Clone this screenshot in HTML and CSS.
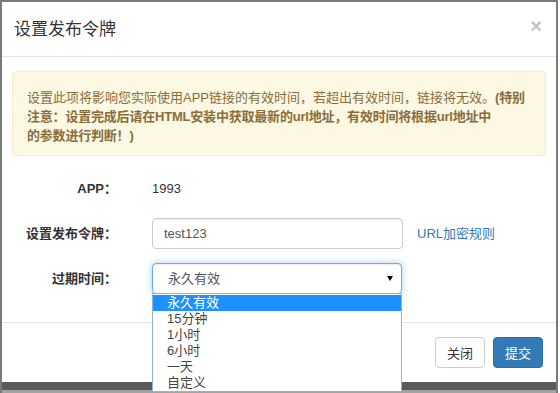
FILE: index.html
```html
<!DOCTYPE html>
<html lang="zh-CN">
<head>
    <meta charset="UTF-8">
    <meta name="viewport" content="width=device-width, initial-scale=1.0">
    <title>设置发布令牌</title>
    <link rel="stylesheet" href="styles.css">
</head>
<body>
    <div class="frame">
        <div class="modal">
            <div class="modal-header">
                <h4 class="modal-title">设置发布令牌</h4>
                <span class="close">&times;</span>
            </div>
            <div class="modal-body">
                <div class="alert">
                    <span>设置此项将影响您实际使用APP链接的有效时间，若超出有效时间，链接将无效。</span><b>(特别<br>注意：设置完成后请在HTML安装中获取最新的url地址，有效时间将根据url地址中<br>的参数进行判断！)</b>
                </div>
                <form class="form-horizontal">
                    <div class="form-group">
                        <label>APP：</label>
                        <div class="form-static">1993</div>
                    </div>
                    <div class="form-group">
                        <label>设置发布令牌：</label>
                        <input type="text" class="form-control" value="test123">
                        <a href="#" class="rule-link">URL加密规则</a>
                    </div>
                    <div class="form-group">
                        <label>过期时间：</label>
                        <div class="select-wrap">
                            <div class="form-control select-box">永久有效<span class="caret"></span></div>
                            <ul class="dropdown">
                                <li class="selected">永久有效</li>
                                <li>15分钟</li>
                                <li>1小时</li>
                                <li>6小时</li>
                                <li>一天</li>
                                <li>自定义</li>
                            </ul>
                        </div>
                    </div>
                </form>
            </div>
            <div class="modal-footer">
                <button type="button" class="btn">关闭</button>
                <button type="button" class="btn btn-primary">提交</button>
            </div>
        </div>
        <div class="backdrop-strip"></div>
    </div>
</body>
</html>
```

FILE: styles.css
```css
:root {
    --color-texto: #333333;
    --color-borde: #cccccc;
    --color-primario: #337ab7;
    --color-aviso-fondo: #fcf8e3;
    --color-aviso-borde: #faebcc;
    --color-aviso-texto: #8a6d3b;
}
html, body {
    margin: 0;
    height: 393px;
    overflow: hidden;
    background: #ffffff;
}
body {
    font-family: "Liberation Sans", "Noto Sans CJK SC", sans-serif;
    font-size: 13px;
    line-height: 19px;
    color: var(--color-texto);
}
.frame {
    width: 558px;
    height: 393px;
    box-sizing: border-box;
    border-top: 2px solid #7a7a7a;
    border-left: 2px solid #7a7a7a;
    border-right: 2px solid #7a7a7a;
    display: flex;
    flex-direction: column;
}
.modal {
    background: #ffffff;
    position: relative;
}
.modal-header {
    display: flex;
    justify-content: space-between;
    align-items: center;
    padding: 16px 14px 14px 12px;
    border-bottom: 1px solid #e5e5e5;
}
.modal-title {
    margin: 0;
    font-size: 17px;
    line-height: 24px;
    font-weight: normal;
}
.close {
    font-size: 20px;
    font-weight: bold;
    line-height: 20px;
    color: #c4c4c4;
    margin-top: -8px;
}
.modal-body {
    padding: 14px 10px 14px 10px;
}
.alert {
    padding: 16px 14px 10px 14px;
    margin-bottom: 17px;
    background: var(--color-aviso-fondo);
    border: 1px solid var(--color-aviso-borde);
    border-radius: 4px;
    color: var(--color-aviso-texto);
    white-space: nowrap;
}
.alert b {
    letter-spacing: -0.2px;
}
.form-horizontal {
    margin: 0 0 14px 0;
    display: flex;
    flex-direction: column;
    gap: 14px;
}
.form-group {
    display: flex;
    align-items: center;
    height: 31px;
}
.form-group label {
    width: 105px;
    margin-right: 35px;
    text-align: right;
    font-weight: bold;
    flex-shrink: 0;
}
.form-static {
    color: var(--color-texto);
}
.form-control {
    width: 251px;
    height: 31px;
    box-sizing: border-box;
    padding: 5px 11px;
    font-family: inherit;
    font-size: 13px;
    color: #555555;
    background: #ffffff;
    border: 1px solid var(--color-borde);
    border-radius: 4px;
    box-shadow: inset 0 1px 1px rgba(0, 0, 0, 0.075);
}
.rule-link {
    margin-left: 14px;
    color: var(--color-primario);
    text-decoration: none;
}
.select-wrap {
    position: relative;
}
.select-box {
    width: 250px;
    display: flex;
    align-items: center;
    justify-content: space-between;
    padding: 5px 8px 5px 15px;
    border-color: #66afe9;
    box-shadow: inset 0 1px 1px rgba(0, 0, 0, 0.075), 0 0 7px rgba(102, 175, 233, 0.6);
}
.caret {
    width: 0;
    height: 0;
    border-left: 3px solid transparent;
    border-right: 3px solid transparent;
    border-top: 5px solid #000000;
}
.dropdown {
    position: absolute;
    top: 30px;
    left: 0;
    z-index: 10;
    width: 250px;
    box-sizing: border-box;
    margin: 0;
    padding: 1px 0 0 0;
    list-style: none;
    background: #ffffff;
    border: 1px solid #8fb3e0;
    color: #444444;
}
.dropdown li {
    height: 16px;
    line-height: 16px;
    padding-left: 14px;
}
.dropdown li.selected {
    background: #1e90ff;
    color: #ffffff;
}
.modal-footer {
    display: flex;
    justify-content: flex-end;
    gap: 8px;
    padding: 14px 13px 14px 14px;
    border-top: 1px solid #e5e5e5;
}
.btn {
    width: 50px;
    height: 31px;
    padding: 0;
    font-family: inherit;
    font-size: 13px;
    color: var(--color-texto);
    background: #ffffff;
    border: 1px solid var(--color-borde);
    border-radius: 4px;
}
.btn-primary {
    color: #ffffff;
    background: var(--color-primario);
    border-color: #2e6da4;
}
.backdrop-strip {
    flex: 1;
    background: linear-gradient(#5a5a5a 0, #5a5a5a 8px, #a3a3a3 8px);
}
```
